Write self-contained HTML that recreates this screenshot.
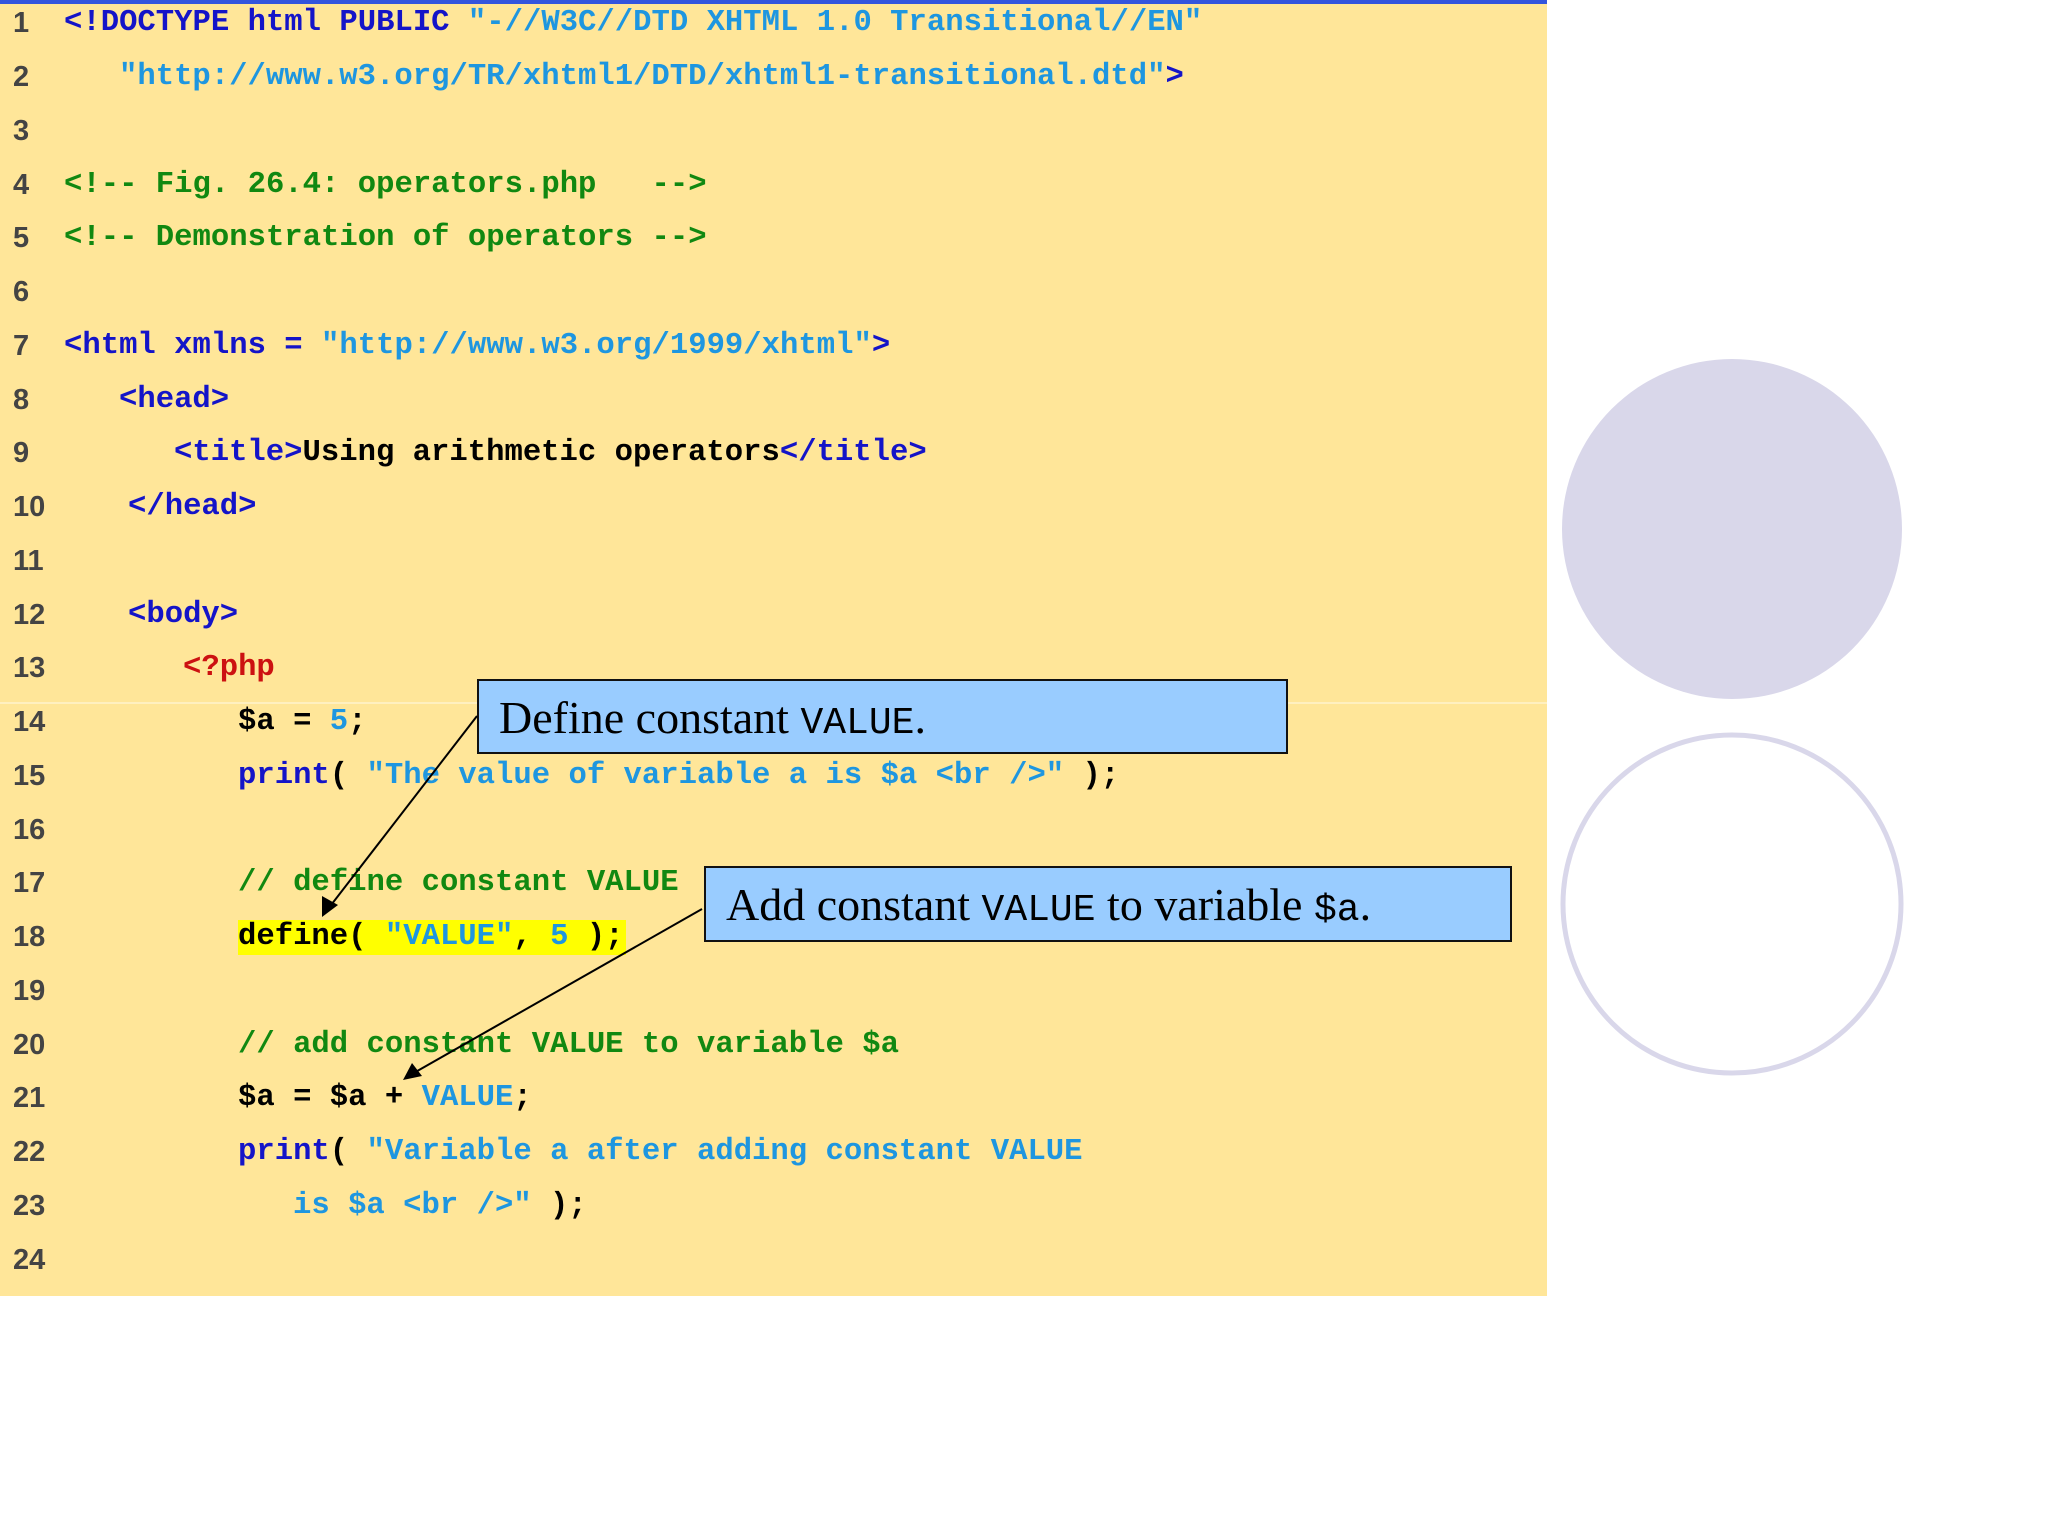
<!DOCTYPE html>
<html><head><style>
body{margin:0;width:2048px;height:1536px;background:#fff;position:relative;overflow:hidden}
#p{position:absolute;left:0;top:0;width:1547px;height:1296px;background:#ffe699}
#top{position:absolute;left:0;top:0;width:1547px;height:4px;background:#3355dd}
.l{position:absolute;height:54px;line-height:54px;font-family:"Liberation Mono",monospace;font-weight:bold;font-size:30.6px;white-space:pre;color:#000}
.n{position:absolute;left:13px;height:54px;line-height:54px;font-family:"Liberation Sans",sans-serif;font-weight:bold;font-size:29px;color:#444}
.k{color:#1414c8}.s{color:#1e96e0}.c{color:#118811}.r{color:#cc1111}
.box{position:absolute;background:#99ccff;border:2.5px solid #111;box-sizing:border-box;font-family:"Liberation Serif",serif;font-size:46px;line-height:1;padding-left:20px;white-space:pre}
.box .m{font-family:"Liberation Mono",monospace;font-size:38px}
</style></head><body>
<div id="p"></div><div id="top"></div>
<div style="position:absolute;left:0;top:702px;width:1547px;height:2px;background:#fff0c0"></div>
<div style="position:absolute;left:238px;top:920px;width:388px;height:35px;background:#ffff00"></div>
<svg style="position:absolute;left:1500px;top:300px" width="548" height="900">
<circle cx="232" cy="229" r="170" fill="#d9d7ea"/>
<circle cx="232" cy="604" r="169" fill="none" stroke="#d9d7ea" stroke-width="5"/>
</svg>

<div class="n" style="top:-4px">1</div><div class="l" style="left:64px;top:-4px"><span class="k">&lt;!DOCTYPE html PUBLIC </span><span class="s">"-//W3C//DTD XHTML 1.0 Transitional//EN"</span></div>
<div class="n" style="top:50px">2</div><div class="l" style="left:119px;top:50px"><span class="s">"http://www.w3.org/TR/xhtml1/DTD/xhtml1-transitional.dtd"</span><span class="k">&gt;</span></div>
<div class="n" style="top:104px">3</div>
<div class="n" style="top:158px">4</div><div class="l c" style="left:64px;top:158px">&lt;!-- Fig. 26.4: operators.php   --&gt;</div>
<div class="n" style="top:211px">5</div><div class="l c" style="left:64px;top:211px">&lt;!-- Demonstration of operators --&gt;</div>
<div class="n" style="top:265px">6</div>
<div class="n" style="top:319px">7</div><div class="l" style="left:64px;top:319px"><span class="k">&lt;html xmlns = </span><span class="s">"http://www.w3.org/1999/xhtml"</span><span class="k">&gt;</span></div>
<div class="n" style="top:373px">8</div><div class="l k" style="left:119px;top:373px">&lt;head&gt;</div>
<div class="n" style="top:426px">9</div><div class="l" style="left:174px;top:426px"><span class="k">&lt;title&gt;</span>Using arithmetic operators<span class="k">&lt;/title&gt;</span></div>
<div class="n" style="top:480px">10</div><div class="l k" style="left:128px;top:480px">&lt;/head&gt;</div>
<div class="n" style="top:534px">11</div>
<div class="n" style="top:588px">12</div><div class="l k" style="left:128px;top:588px">&lt;body&gt;</div>
<div class="n" style="top:641px">13</div><div class="l r" style="left:183px;top:641px">&lt;?php</div>
<div class="n" style="top:695px">14</div><div class="l" style="left:238px;top:695px">$a = <span class="s">5</span>;</div>
<div class="n" style="top:749px">15</div><div class="l" style="left:238px;top:749px"><span class="k">print</span>( <span class="s">"The value of variable a is $a &lt;br /&gt;"</span> );</div>
<div class="n" style="top:803px">16</div>
<div class="n" style="top:856px">17</div><div class="l c" style="left:238px;top:856px">// define constant VALUE</div>
<div class="n" style="top:910px">18</div><div class="l" style="left:238px;top:910px">define( <span class="s">"VALUE"</span>, <span class="s">5</span> );</div>
<div class="n" style="top:964px">19</div>
<div class="n" style="top:1018px">20</div><div class="l c" style="left:238px;top:1018px">// add constant VALUE to variable $a</div>
<div class="n" style="top:1071px">21</div><div class="l" style="left:238px;top:1071px">$a = $a + <span class="s">VALUE</span>;</div>
<div class="n" style="top:1125px">22</div><div class="l" style="left:238px;top:1125px"><span class="k">print</span>( <span class="s">"Variable a after adding constant VALUE</span></div>
<div class="n" style="top:1179px">23</div><div class="l" style="left:293px;top:1179px"><span class="s">is $a &lt;br /&gt;"</span> );</div>
<div class="n" style="top:1233px">24</div>

<div class="box" style="left:477px;top:679px;width:811px;height:75px;padding-top:14px">Define constant <span class="m">VALUE</span>.</div>
<div class="box" style="left:704px;top:866px;width:808px;height:76px;padding-top:14px">Add constant <span class="m">VALUE</span> to variable <span class="m">$a</span>.</div>

<svg style="position:absolute;left:0;top:0" width="2048" height="1536">
<defs><marker id="a" markerWidth="10" markerHeight="10" refX="9" refY="5" orient="auto" markerUnits="userSpaceOnUse"><path d="M0,0 L10,5 L0,10z" fill="#000" transform="scale(2) translate(-5,-2.5)"/></marker></defs>
<line x1="477" y1="716" x2="328" y2="909" stroke="#000" stroke-width="2"/>
<path d="M322,917 L322,896 L338,905z" fill="#000"/>
<line x1="702" y1="909" x2="412" y2="1074" stroke="#000" stroke-width="2"/>
<path d="M403,1080 L412,1063 L422,1076z" fill="#000"/>
</svg>
</body></html>
